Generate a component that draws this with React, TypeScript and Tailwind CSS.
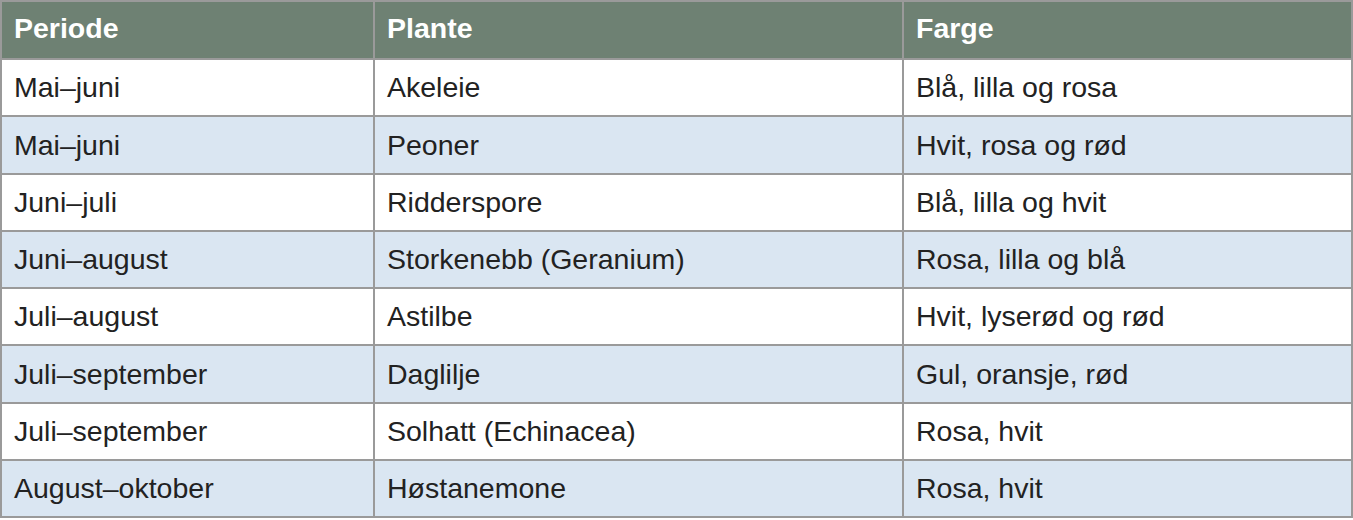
const rows = [
  ['Mai–juni', 'Akeleie', 'Blå, lilla og rosa'],
  ['Mai–juni', 'Peoner', 'Hvit, rosa og rød'],
  ['Juni–juli', 'Ridderspore', 'Blå, lilla og hvit'],
  ['Juni–august', 'Storkenebb (Geranium)', 'Rosa, lilla og blå'],
  ['Juli–august', 'Astilbe', 'Hvit, lyserød og rød'],
  ['Juli–september', 'Daglilje', 'Gul, oransje, rød'],
  ['Juli–september', 'Solhatt (Echinacea)', 'Rosa, hvit'],
  ['August–oktober', 'Høstanemone', 'Rosa, hvit'],
];

export default function App() {
  return (
    <div className="w-[1353px] bg-white font-['Liberation_Sans',Arial,sans-serif]">
      <table className="w-full table-fixed border-collapse text-[28.5px] leading-none">
        <colgroup>
          <col className="w-[373px]" />
          <col className="w-[529px]" />
          <col />
        </colgroup>
        <thead>
          <tr className="h-[58px] bg-[#6e8173] text-white">
            {['Periode', 'Plante', 'Farge'].map((h) => (
              <th key={h} className="border-2 border-[#9a9a9a] px-[12px] pb-[3px] text-left align-middle font-bold">
                {h}
              </th>
            ))}
          </tr>
        </thead>
        <tbody>
          {rows.map((row, i) => (
            <tr key={i} className={i % 2 === 1 ? 'h-[57.25px] bg-[#dae6f2]' : 'h-[57.25px] bg-white'}>
              {row.map((cell, j) => (
                <td key={j} className="border-2 border-[#9a9a9a] px-[12px] align-middle text-[#222222]">
                  {cell}
                </td>
              ))}
            </tr>
          ))}
        </tbody>
      </table>
    </div>
  );
}
